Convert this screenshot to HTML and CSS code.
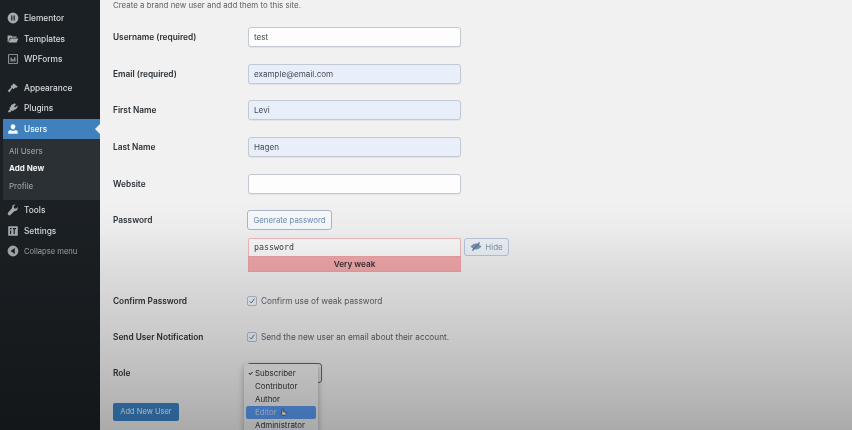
FILE: index.html
```html
<!DOCTYPE html>
<html lang="en">
<head>
<meta charset="utf-8">
<title>Add New User</title>
<link rel="stylesheet" href="styles.css">
</head>
<body>
<div class="page">
  <nav class="sidebar">
    <ul class="menu group-a">
      <li class="item"><svg class="ico" viewBox="0 0 20 20"><path fill-rule="evenodd" d="M10 1a9 9 0 1 0 0 18 9 9 0 0 0 0-18zM7 6h2v8H7zM11 6h2v8h-2z"/></svg>Elementor</li>
      <li class="item"><svg class="ico" viewBox="0 0 20 20"><path d="M1 4h6l2 2h7v2H5L2 15H1zM6 9h13l-3 7H2.500z"/></svg>Templates</li>
      <li class="item"><svg class="ico" viewBox="0 0 20 20"><path fill-rule="evenodd" d="M2 2h16v16H2zM3.500 3.500v13h13v-13zM6 8h2v6H6zM9 10h2v4H9zM12 7h2v7h-2z"/></svg>WPForms</li>
    </ul>
    <ul class="menu group-b">
      <li class="item"><svg class="ico" viewBox="0 0 20 20"><path d="M11 2l7 6-3 2-1-1-3 3-2-2-5 7-3-2 6-6-1-2 3-2z"/></svg>Appearance</li>
      <li class="item"><svg class="ico" viewBox="0 0 20 20"><path d="M13 2l2 2-3 3 2 2 3-3 1 2-3 4-3 1-2 2-2-1-3 3H2v-2l3-3-1-2 2-2 1-3z"/></svg>Plugins</li>
      <li class="item current"><svg class="ico" viewBox="0 0 20 20"><path d="M10 2a4 4 0 0 1 4 4c0 2.500-1.800 5-4 5s-4-2.500-4-5a4 4 0 0 1 4-4zM6 11.500c1 1 2.500 1.500 4 1.500s3-.5 4-1.500c2.500.5 4 2 4 4V18H2v-2.500c0-2 1.500-3.500 4-4z"/></svg>Users</li>
    </ul>
    <ul class="submenu">
      <li>All Users</li>
      <li class="on">Add New</li>
      <li>Profile</li>
    </ul>
    <ul class="menu">
      <li class="item"><svg class="ico" viewBox="0 0 20 20"><path d="M18 5l-3 3-3-1-1-3 3-3c-3-.5-6 1.500-5.500 5.500L2 14a2.500 2.500 0 0 0 4 4l6.500-6.500C16.500 12 18.500 9 18 5z"/></svg>Tools</li>
      <li class="item"><svg class="ico" viewBox="0 0 20 20"><path fill-rule="evenodd" d="M2 2h16v16H2zM5 5v2h3V5zM5 9v6h2V9zM10 5v2h1v8h2V7h2V5z"/></svg>Settings</li>
      <li class="item small"><svg class="ico" viewBox="0 0 20 20"><path fill-rule="evenodd" d="M10 1a9 9 0 1 0 0 18 9 9 0 0 0 0-18zM13 5v10L6 10z"/></svg>Collapse menu</li>
    </ul>
  </nav>

  <main class="content">
    <p class="intro">Create a brand new user and add them to this site.</p>
    <form class="form">
      <div class="row"><span class="label">Username (required)</span><span class="input">test</span></div>
      <div class="row"><span class="label">Email (required)</span><span class="input filled">example@email.com</span></div>
      <div class="row"><span class="label">First Name</span><span class="input filled">Levi</span></div>
      <div class="row"><span class="label">Last Name</span><span class="input filled">Hagen</span></div>
      <div class="row"><span class="label">Website</span><span class="input"></span></div>
      <div class="row row-pass">
        <span class="label">Password</span>
        <div class="pass">
          <span class="btn-gen">Generate password</span>
          <div class="pass-line">
            <div class="pass-box">
              <span class="pass-input">password</span>
              <span class="strength">Very weak</span>
            </div>
            <span class="btn-hide"><svg class="eye" viewBox="0 0 20 14"><path d="M1 7c2.500-3.500 5.500-5 9-5s6.500 1.500 9 5c-2.500 3.500-5.500 5-9 5s-6.500-1.500-9-5z"/><path class="slash" d="M4 14L16 0"/></svg>Hide</span>
          </div>
        </div>
      </div>
      <div class="row row-check first-check"><span class="label">Confirm Password</span><label class="check"><span class="box"><svg viewBox="0 0 12 12"><path d="M2.500 6.500l2.500 2.500 4.500-6.500"/></svg></span>Confirm use of weak password</label></div>
      <div class="row row-check"><span class="label">Send User Notification</span><label class="check"><span class="box"><svg viewBox="0 0 12 12"><path d="M2.500 6.500l2.500 2.500 4.500-6.500"/></svg></span>Send the new user an email about their account.</label></div>
      <div class="row row-role">
        <span class="label">Role</span>
        <div class="select-wrap">
          <span class="select"></span>
          <ul class="dropdown">
            <li><span class="tick">✓</span>Subscriber</li>
            <li>Contributor</li>
            <li>Author</li>
            <li class="hover">Editor<svg class="hand" viewBox="0 0 12 12"><path d="M3 1.500h2v4l4 1v3.500l-1 1H4L1.500 7.500 3 7z"/></svg></li>
            <li>Administrator</li>
          </ul>
        </div>
      </div>
      <div class="submit-row"><span class="btn-primary">Add New User</span></div>
    </form>
  </main>
</div>
</body>
</html>
```
FILE: styles.css
```css
* { box-sizing: border-box; }
html, body { margin: 0; padding: 0; height: 100%; overflow: hidden; }
body { font-family: Inter, "Liberation Sans", sans-serif; font-size: 8.6px; color: #3c434a; }
ul { list-style: none; margin: 0; padding: 0; }

.page { position: relative; display: flex; width: 852px; height: 430px; overflow: hidden; filter: blur(0.55px); }
.page::after { content: ""; position: absolute; inset: 0; pointer-events: none; background: linear-gradient(180deg, rgba(0,0,0,0) 0, rgba(0,0,0,0) 200px, rgba(0,0,0,.025) 230px, rgba(0,0,0,.087) 270px, rgba(0,0,0,.158) 330px, rgba(0,0,0,.22) 380px, rgba(0,0,0,.295) 430px); }

.sidebar { flex: 0 0 100px; background: #1b2024; padding: 8px 0 0 3px; color: #d9dcde; }
.menu { display: flex; flex-direction: column; }
.item { display: flex; align-items: center; gap: 5px; height: 20.500px; padding-left: 4px; font-size: 8.300px; font-weight: 500; }
.ico { width: 12px; height: 12px; fill: #a7abae; flex: none; }
.group-b { margin-top: 8px; }
.current { position: relative; background: #3f80bd; color: #f4f7fa; }
.current .ico { fill: #f4f7fa; }
.current::after { content: ""; position: absolute; right: 0; top: 5px; border: 5px solid transparent; border-right-color: #f0f0f1; border-left-width: 0; }
.submenu { background: #2a3034; padding: 3px 0 5.250px 6px; color: #a6abaf; font-size: 8px; }
.submenu li { height: 17.500px; display: flex; align-items: center; }
.submenu .on { color: #f2f3f4; font-weight: 700; }
.small { font-size: 7.600px; color: #a4a9ad; font-weight: 400; }

.content { flex: 1; padding: 0 0 0 13px; background: #f1f1f1; }
.intro { margin: 0; height: 10px; line-height: 10px; font-size: 7.900px; color: #5b6167; }
.form { display: flex; flex-direction: column; padding-top: 9px; }
.row { display: flex; align-items: center; height: 36.600px; }
.label { flex: 0 0 135px; font-weight: 600; font-size: 8.300px; color: #2c3136; }
.input { width: 213px; height: 20px; display: flex; align-items: center; padding-left: 5px; background: #fdfdfd; border: 1px solid #c3c9d2; border-radius: 3px; font-size: 8.100px; color: #454b51; box-shadow: 0 1px 1px rgba(0,0,0,.06); }
.filled { background: #e9effa; }

.row-pass { height: auto; align-items: flex-start; padding-top: 8px; }
.row-pass .label { padding-top: 5px; }
.pass { display: flex; flex-direction: column; margin-left: -1px; }
.btn-gen { align-self: flex-start; height: 20px; width: 85px; display: flex; align-items: center; justify-content: center; background: #f8f9fb; border: 1px solid #a9b7cb; border-radius: 3px; color: #6a8cb5; font-size: 7.800px; }
.pass-line { display: flex; align-items: flex-start; gap: 3px; margin: 8px 0 0 1px; }
.pass-box { width: 213px; display: flex; flex-direction: column; }
.pass-input { height: 18px; display: flex; align-items: center; padding-left: 5px; background: #fbfafa; border: 1px solid #eeb9bd; border-bottom: 0; border-radius: 2px 2px 0 0; font-family: "DejaVu Sans Mono", monospace; font-size: 8.300px; color: #383e44; }
.strength { height: 16px; display: flex; align-items: center; justify-content: center; background: #f3a9ac; border: 1px solid #eda3a6; font-size: 8.200px; font-weight: 600; color: #3a3034; }
.btn-hide { width: 45px; height: 18px; display: flex; align-items: center; justify-content: center; gap: 3px; background: #edf2f8; border: 1px solid #b9c7da; border-radius: 3px; color: #7f95ad; font-size: 8px; }
.eye { width: 12px; height: 9px; fill: #7e95b1; }
.slash { stroke: #4f74a0; stroke-width: 2; fill: none; }

.row-check { height: 36px; }
.first-check { margin-top: 11px; }
.check { display: flex; align-items: center; gap: 4px; margin-left: -1px; color: #5a5f65; font-size: 8.250px; }
.box { width: 10px; height: 10px; display: block; background: #f3f5fa; border: 1px solid #b4bccd; border-radius: 2px; }
.box svg { display: block; width: 8px; height: 8px; fill: none; stroke: #4a72ab; stroke-width: 1.500; }

.row-role { height: 36px; }
.select-wrap { position: relative; margin-left: -1px; }
.select { display: block; width: 75px; height: 20px; border: 1.500px solid #46729f; border-radius: 3px; background: #f1f1f1; }
.dropdown { position: absolute; left: -3px; top: 1px; width: 74px; height: 72px; padding-top: 2px; background: #f0f0f0; border-radius: 4px; box-shadow: 0 2px 6px rgba(0,0,0,.3); color: #2c3136; font-size: 7.900px; }
.dropdown li { position: relative; display: flex; align-items: center; height: 13.200px; padding-left: 9px; margin: 0 2px; }
.tick { position: absolute; left: 2px; font-size: 6px; font-weight: 700; }
.hover { background: #5c9df5; border-radius: 2px; color: #c4dcfa; }
.hand { width: 8px; height: 8px; margin-left: 3px; fill: #f4f7fb; stroke: #222; stroke-width: .8; }

.submit-row { margin-top: 12px; }
.btn-primary { display: flex; align-items: center; justify-content: center; width: 66px; height: 18px; background: #3b84c8; border-radius: 2px; color: #eef5fb; font-size: 7.500px; }
```
